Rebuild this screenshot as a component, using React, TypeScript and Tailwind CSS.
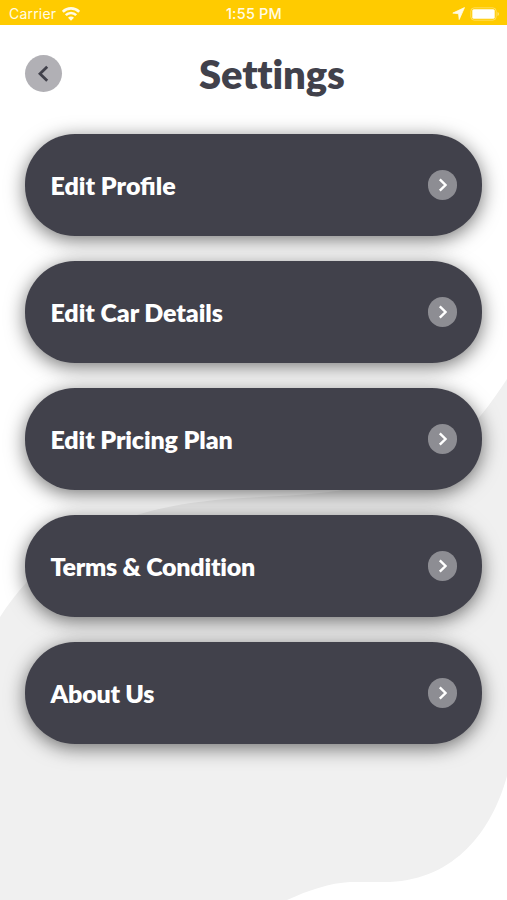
const items = [
  { label: 'Edit Profile', tracking: '' },
  { label: 'Edit Car Details', tracking: 'tracking-[-0.08px]' },
  { label: 'Edit Pricing Plan', tracking: 'tracking-[-0.12px]' },
  { label: 'Terms & Condition', tracking: 'tracking-[-0.24px]' },
  { label: 'About Us', tracking: 'tracking-[-0.24px]' },
];

function StatusBar() {
  return (
    <div className="grid h-[25px] grid-cols-3 items-center bg-[#ffcb00] pt-[2px] pr-[7px] pl-[9px] font-['Inter','Liberation_Sans',sans-serif] text-[14px] leading-none text-[#fffbe6]">
      <div className="flex items-center gap-[6px]">
        <span className="tracking-[0.2px]">Carrier</span>
        <svg width="18" height="14" viewBox="0 0 18 14" fill="none" stroke="currentColor" strokeWidth="2.6">
          <path d="M.8 4.8a11.6 11.6 0 0 1 16.4 0" />
          <path d="M3.8 8.2a7.4 7.4 0 0 1 10.4 0" />
          <path d="M6 10.8a4.2 4.2 0 0 1 6 0L9 13.8Z" fill="currentColor" stroke="none" />
        </svg>
      </div>
      <span className="-ml-[1px] pt-px text-center text-[14.5px] font-medium tracking-[0.2px] whitespace-nowrap">1:55 PM</span>
      <div className="flex items-center justify-end gap-[5px]">
        <svg width="13" height="13" viewBox="0 0 13 13" fill="currentColor" stroke="currentColor" strokeWidth=".8">
          <path d="M12.5.6.8 6.1l5.8.6.6 5.8Z" />
        </svg>
        <svg width="30" height="14" viewBox="0 0 30 14">
          <rect x=".8" y=".8" width="25.4" height="12.4" rx="3.5" fill="none" stroke="#fff" strokeOpacity=".35" />
          <rect x="2.3" y="2.3" width="22.4" height="9.4" rx="1.5" fill="#fff" />
          <path d="M27.5 5v4q1.5-.6 1.5-2t-1.5-2Z" fill="#fff" fillOpacity=".45" />
        </svg>
      </div>
    </div>
  );
}

function BackgroundBlob() {
  return (
    <svg className="absolute inset-0" width="507" height="900" viewBox="0 0 507 900">
      <path
        fill="#f0f0f0"
        d="M507 379C490 405 474 426 455 442C405 486 340 494 260 497C220 499 180 502 140 514C80 530 32 567 0 617V900H287C309 890 330 883 350 882L390 882C455 879 492 831 507 776Z"
      />
    </svg>
  );
}

export default function App() {
  return (
    <div className="relative h-[900px] w-[507px] overflow-hidden bg-white font-['Lato',sans-serif]">
      <BackgroundBlob />
      <div className="relative">
        <StatusBar />
        <header className="flex h-[108px] items-start pl-[25px]">
          <button className="mt-[30px] flex size-[37px] items-center justify-center rounded-full bg-[#b1b0b5]" aria-label="Back">
            <svg width="12" height="18" viewBox="0 0 12 18" fill="none" stroke="#41414b" strokeWidth="2.8">
              <path d="M9.2 1.8 2 8.8l7.2 7" />
            </svg>
          </button>
          <h1 className="mt-[25px] ml-[137px] text-[40px] leading-[48px] font-extrabold tracking-[-0.15px] text-[#41414b] [font-variant-ligatures:none]">Settings</h1>
        </header>
        <main className="flex flex-col gap-[24.5px] px-[25px] pt-[0.5px]">
          {items.map(({ label, tracking }) => (
            <button
              key={label}
              className="flex h-[102.5px] w-full items-center justify-between rounded-[50px] bg-[#41414b] pr-[25px] pl-[25.5px] text-white shadow-[0_4px_19px_rgba(0,0,0,0.55)]"
            >
              <span className={`text-[25px] leading-[30px] font-extrabold ${tracking}`}>{label}</span>
              <span className="flex size-[29.5px] items-center justify-center rounded-full bg-[#8d8d93]">
                <svg width="10" height="14" viewBox="0 0 10 14" fill="none" stroke="#fff" strokeWidth="2.4">
                  <path d="m2.8 1.3 5.7 5.7-5.7 5.7" />
                </svg>
              </span>
            </button>
          ))}
        </main>
      </div>
    </div>
  );
}
